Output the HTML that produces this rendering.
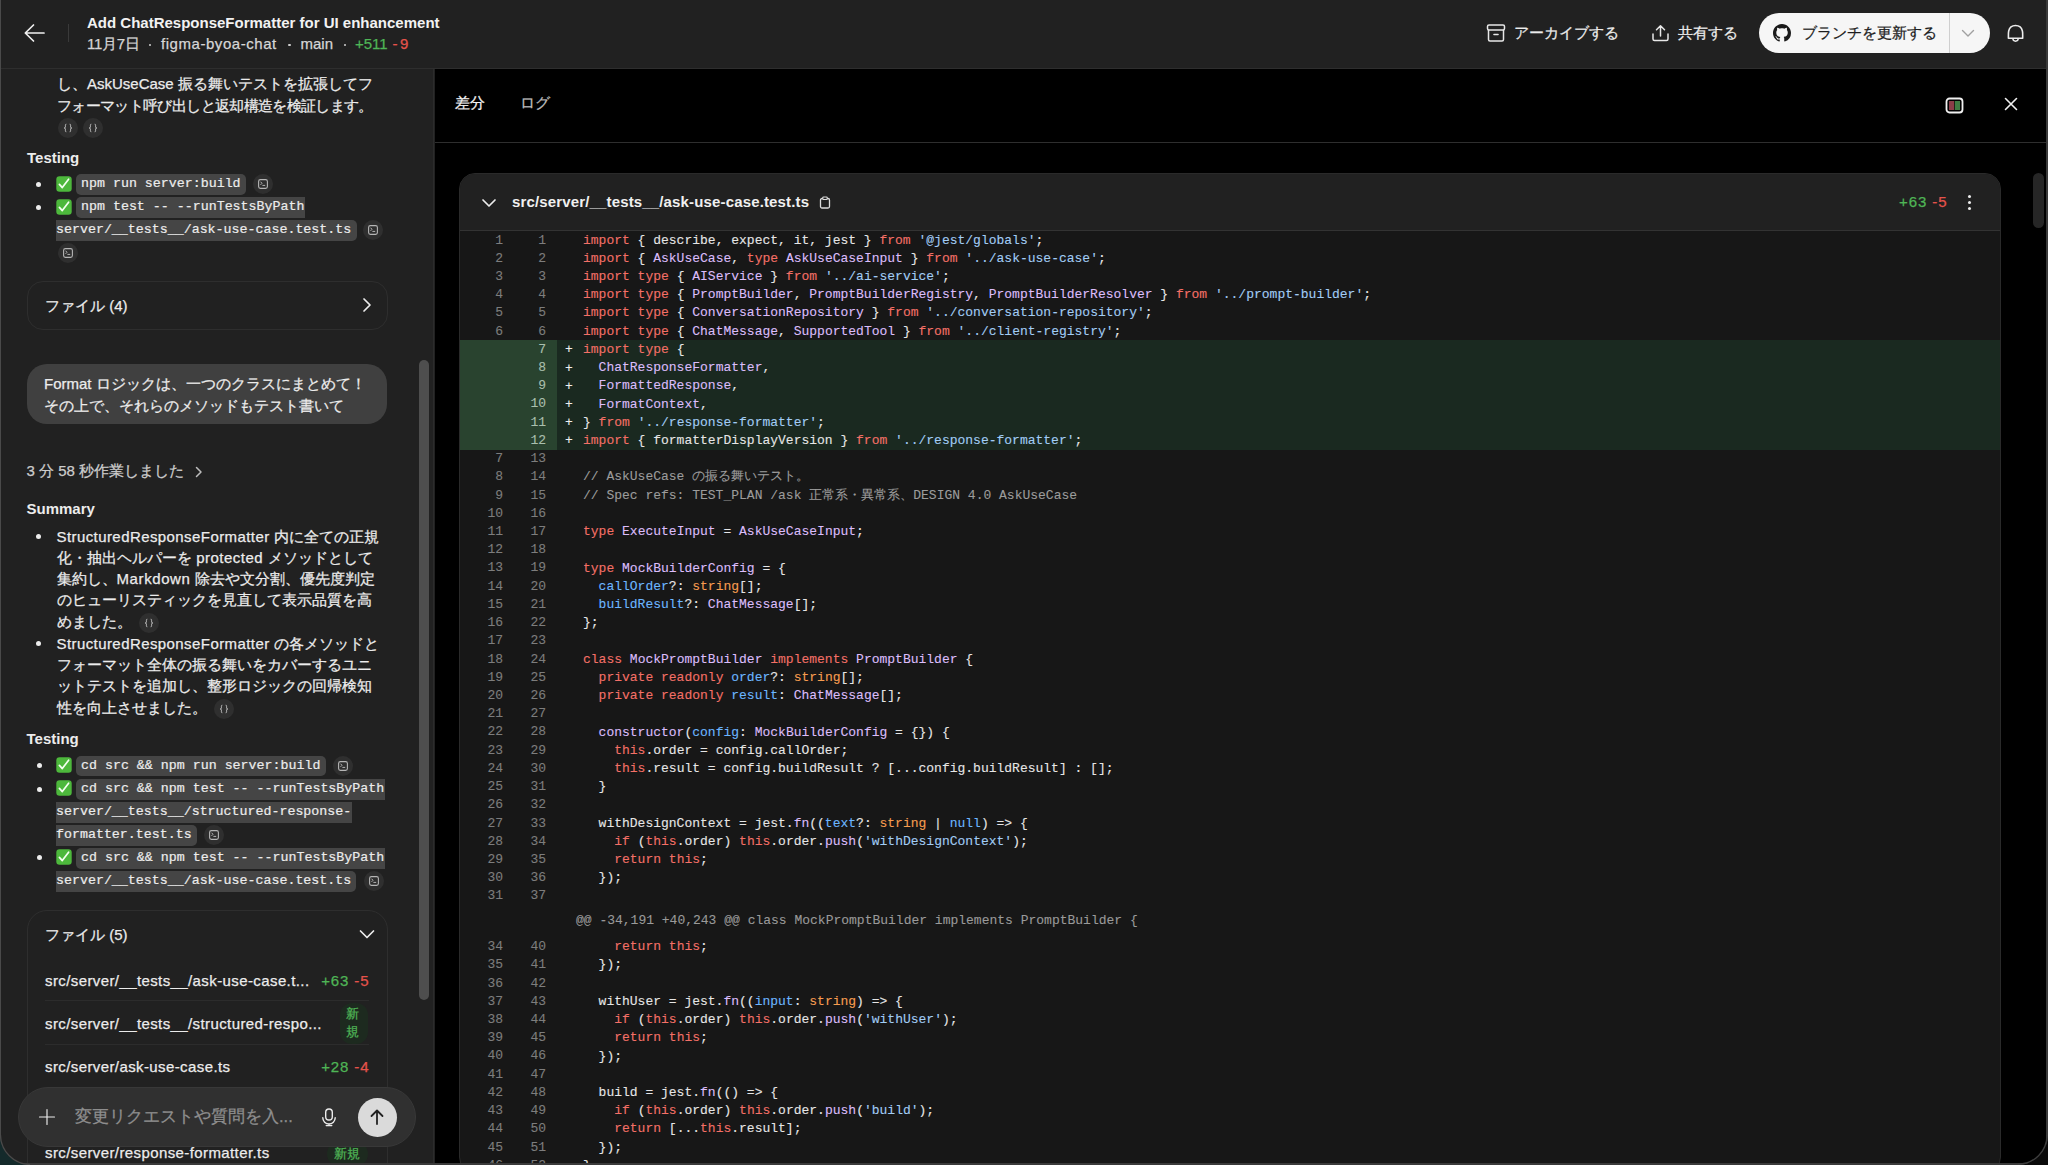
<!DOCTYPE html>
<html><head><meta charset="utf-8">
<style>
*{box-sizing:border-box}
html,body{margin:0;padding:0}
body{width:2048px;height:1165px;overflow:hidden;background:#212121;position:relative;font-family:"Liberation Sans",sans-serif;color:#ececec}
.a{position:absolute;white-space:pre}
.mono{font-family:"Liberation Mono",monospace}
/* header */
#hdr{position:absolute;left:0;top:0;width:2048px;height:69px;background:#212121;border-bottom:1px solid #2e2e2e;z-index:5}
/* sidebar */
#side{position:absolute;left:0;top:69px;width:434px;height:1096px;background:#212121;border-right:1px solid #2c2c2c;overflow:hidden}
.st{position:absolute;font-size:15px;line-height:20px;color:#ececec;white-space:pre}
.st,.a{-webkit-text-stroke:0.25px currentColor}
.b{font-weight:bold;-webkit-text-stroke:0 !important}
.chip{-webkit-text-stroke:0.2px currentColor}
#code{-webkit-text-stroke:0.1px currentColor}
.w{letter-spacing:0.42px}
.fl{letter-spacing:0.4px}
.dot{position:absolute;width:5px;height:5px;border-radius:50%;background:#ececec}
.chip{position:absolute;height:20.5px;background:#454545;border-radius:5px;font-family:"Liberation Mono",monospace;font-size:13.3px;line-height:20px;color:#ececec;white-space:pre;padding:0 5px}
.ic{position:absolute;width:20px;height:20px;border-radius:50%;background:#2f2f2f}
.ic svg{position:absolute;left:5px;top:5px}
.emo{position:absolute;width:16px;height:16px}
/* diff */
#diff{position:absolute;left:435px;top:69px;width:1611px;height:1096px;background:#000;overflow:hidden}
#card{position:absolute;left:24px;top:104px;width:1542px;height:1000px;border:1px solid #2a2a2a;border-radius:16px;overflow:hidden;background:#171717}
#ch{position:absolute;left:0;top:0;width:100%;height:57px;background:#212121;border-bottom:1px solid #333}
#code{position:absolute;left:0;top:57px;width:100%;font-family:"Liberation Mono",monospace;font-size:13px;color:#e6e6e6}
.row{height:18.23px;line-height:18.23px;white-space:pre;position:relative}
.row .g{display:inline-block;width:97px;height:100%;position:relative;vertical-align:top}
.row .on{position:absolute;right:54px;top:0.5px;color:#7d7d7d}
.row .nn{position:absolute;right:11px;top:0.5px;color:#7d7d7d}
.row .sg{display:inline-block;width:26px;padding-left:8px;vertical-align:top;color:#f0f0f0;position:relative;top:1px}
.row.add{background:#1a2920}
.row.add .g{background:#29432f}
.row.add .nn{color:#a9bfad}
.hunk{height:32.5px;line-height:32.5px;white-space:pre;padding-left:116px;color:#9a9a9a}
.k{color:#f47067}.t{color:#dcbdfb}.s{color:#a2cdf5}.p{color:#6cb6ff}.o{color:#f69d50}.c{color:#9c9c9c}
.row .tx{position:relative;top:0.6px}
</style></head><body>

<!-- ============ HEADER ============ -->
<div id="hdr">
  <svg class="a" style="left:22px;top:22px" width="24" height="22" viewBox="0 0 24 22"><path d="M22 11H3.5M11.5 3L3.3 11L11.5 19" fill="none" stroke="#f0f0f0" stroke-width="1.7" stroke-linecap="round" stroke-linejoin="round"/></svg>
  <div class="a" style="left:68px;top:24px;width:1px;height:18px;background:#3a3a3a"></div>
  <div class="a b" style="left:87px;top:14px;font-size:15px;line-height:18px;color:#f2f2f2">Add ChatResponseFormatter for UI enhancement</div>
  <div class="a" style="left:87px;top:34.5px;font-size:15px;line-height:18px;color:#d6d6d6;letter-spacing:-0.3px">11月7日</div>
  <div class="a" style="left:148.5px;top:43.5px;width:2.5px;height:2.5px;border-radius:50%;background:#cfcfcf"></div>
  <div class="a" style="left:161px;top:34.5px;font-size:15px;line-height:18px;color:#d6d6d6;letter-spacing:0.55px">figma-byoa-chat</div>
  <div class="a" style="left:288px;top:43.5px;width:2.5px;height:2.5px;border-radius:50%;background:#cfcfcf"></div>
  <div class="a" style="left:300.5px;top:34.5px;font-size:15px;line-height:18px;color:#d6d6d6">main</div>
  <div class="a" style="left:343.5px;top:43.5px;width:2.5px;height:2.5px;border-radius:50%;background:#cfcfcf"></div>
  <div class="a" style="left:355px;top:34.5px;font-size:15px;line-height:18px;color:#4fb556">+511</div>
  <div class="a" style="left:392.5px;top:34.5px;font-size:15px;line-height:18px;color:#e5534b"><span style="letter-spacing:2.5px">-</span>9</div>

  <svg class="a" style="left:1486px;top:24px" width="20" height="18" viewBox="0 0 20 18"><rect x="1.5" y="1" width="17" height="5" rx="1.5" fill="none" stroke="#e8e8e8" stroke-width="1.5"/><path d="M2.5 6v9.5a1.5 1.5 0 0 0 1.5 1.5h12a1.5 1.5 0 0 0 1.5-1.5V6" fill="none" stroke="#e8e8e8" stroke-width="1.5"/><path d="M8 10.5h4" stroke="#e8e8e8" stroke-width="1.6" stroke-linecap="round"/></svg>
  <div class="a" style="left:1514px;top:24px;font-size:15px;line-height:18px;color:#ececec">アーカイブする</div>
  <svg class="a" style="left:1651px;top:24px" width="20" height="18" viewBox="0 0 20 18"><path d="M2 10v5a1.5 1.5 0 0 0 1.5 1.5h12A1.5 1.5 0 0 0 17 15v-5" fill="none" stroke="#e8e8e8" stroke-width="1.5" stroke-linecap="round"/><path d="M9.5 12V2.2M5.5 5.8L9.5 1.8L13.5 5.8" fill="none" stroke="#e8e8e8" stroke-width="1.5" stroke-linecap="round" stroke-linejoin="round"/></svg>
  <div class="a" style="left:1678px;top:24px;font-size:15px;line-height:18px;color:#ececec">共有する</div>

  <div class="a" style="left:1759px;top:13px;width:231px;height:40px;border-radius:20px;background:#f6f6f6"></div>
  <svg class="a" style="left:1773px;top:24px" width="18" height="18" viewBox="0 0 16 16"><path fill="#1a1a1a" d="M8 0C3.58 0 0 3.58 0 8c0 3.54 2.29 6.53 5.47 7.59.4.07.55-.17.55-.38 0-.19-.01-.82-.01-1.49-2.01.37-2.53-.49-2.69-.94-.09-.23-.48-.94-.82-1.13-.28-.15-.68-.52-.01-.53.63-.01 1.08.58 1.23.82.72 1.21 1.87.87 2.33.66.07-.52.28-.87.51-1.07-1.78-.2-3.640-.89-3.64-3.95 0-.87.31-1.59.82-2.15-.08-.2-.36-1.02.08-2.12 0 0 .67-.21 2.2.82.64-.18 1.32-.27 2-.27.68 0 1.36.09 2 .27 1.53-1.04 2.2-.82 2.2-.82.44 1.1.16 1.92.08 2.12.51.56.82 1.27.82 2.15 0 3.07-1.87 3.75-3.65 3.95.29.25.54.73.54 1.48 0 1.07-.01 1.93-.01 2.2 0 .21.15.46.55.38A8.013 8.013 0 0016 8c0-4.42-3.58-8-8-8z"/></svg>
  <div class="a" style="left:1802px;top:24px;font-size:15px;line-height:18px;color:#1e1e1e">ブランチを更新する</div>
  <div class="a" style="left:1949px;top:13px;width:1px;height:40px;background:#cfcfcf"></div>
  <svg class="a" style="left:1961px;top:28px" width="14" height="10" viewBox="0 0 14 10"><path d="M1.5 2.5L7 8L12.5 2.5" fill="none" stroke="#a0a0a0" stroke-width="1.4" stroke-linecap="round" stroke-linejoin="round"/></svg>
  <svg class="a" style="left:2005px;top:22.5px" width="21" height="22" viewBox="0 0 21 22"><path d="M3.4 15.2C3.5 12.5 3.2 10.2 3.7 8C4.4 4.6 7.1 2.5 10.55 2.5C14 2.5 16.7 4.6 17.4 8C17.9 10.2 17.6 12.5 17.7 15.2Z" fill="none" stroke="#ececec" stroke-width="1.6" stroke-linejoin="round"/><path d="M7.9 15.8C8 18.9 13.1 18.9 13.2 15.8" fill="none" stroke="#ececec" stroke-width="1.5"/></svg>
</div>

<!-- ============ SIDEBAR ============ -->
<div id="side">
  <!-- coordinates inside: y = abs - 69 -->
  <div class="st" style="left:57px;top:5px">し、AskUseCase 振る舞いテストを拡張してフ</div>
  <div class="st" style="left:57px;top:26.5px;letter-spacing:-0.65px">フォーマット呼び出しと返却構造を検証します。</div>
  <div class="ic" style="left:58px;top:48.5px"><svg width="10" height="10" viewBox="0 0 10 10"><path d="M3.3 1.2C2.4 1.2 2.4 1.8 2.4 2.8V3.8C2.4 4.5 2 5 1.3 5C2 5 2.4 5.5 2.4 6.2V7.2C2.4 8.2 2.4 8.8 3.3 8.8M6.7 1.2C7.6 1.2 7.6 1.8 7.6 2.8V3.8C7.6 4.5 8 5 8.7 5C8 5 7.6 5.5 7.6 6.2V7.2C7.6 8.2 7.6 8.8 6.7 8.8" fill="none" stroke="#cfcfcf" stroke-width="0.9"/></svg></div>
  <div class="ic" style="left:82.5px;top:48.5px"><svg width="10" height="10" viewBox="0 0 10 10"><path d="M3.3 1.2C2.4 1.2 2.4 1.8 2.4 2.8V3.8C2.4 4.5 2 5 1.3 5C2 5 2.4 5.5 2.4 6.2V7.2C2.4 8.2 2.4 8.8 3.3 8.8M6.7 1.2C7.6 1.2 7.6 1.8 7.6 2.8V3.8C7.6 4.5 8 5 8.7 5C8 5 7.6 5.5 7.6 6.2V7.2C7.6 8.2 7.6 8.8 6.7 8.8" fill="none" stroke="#cfcfcf" stroke-width="0.9"/></svg></div>

  <div class="st b" style="left:27px;top:78.5px">Testing</div>
  <!-- bullet 1 -->
  <div class="dot" style="left:36px;top:113px"></div>
  <svg class="emo" style="left:56px;top:107px" viewBox="0 0 16 16"><rect x="0.3" y="0.3" width="15.4" height="15.4" rx="3.2" fill="#4db83c"/><path d="M3.4 8.4L6.3 11.6L12.6 3.2" fill="none" stroke="#f4fff0" stroke-width="1.7" stroke-linecap="round" stroke-linejoin="round"/></svg>
  <div class="chip" style="left:76px;top:105px;width:170px">npm run server:build</div>
  <div class="ic" style="left:253px;top:104.5px"><svg width="10" height="10" viewBox="0 0 10 10"><rect x="0.6" y="0.6" width="8.8" height="8.8" rx="1.8" fill="none" stroke="#b5b5b5" stroke-width="1.1"/><path d="M2.8 3L4 4.3L2.8 5.6M4.8 6.4H6.8" fill="none" stroke="#b5b5b5" stroke-width="1" stroke-linecap="round"/></svg></div>
  <!-- bullet 2 -->
  <div class="dot" style="left:36px;top:136px"></div>
  <svg class="emo" style="left:56px;top:130px" viewBox="0 0 16 16"><rect x="0.3" y="0.3" width="15.4" height="15.4" rx="3.2" fill="#4db83c"/><path d="M3.4 8.4L6.3 11.6L12.6 3.2" fill="none" stroke="#f4fff0" stroke-width="1.7" stroke-linecap="round" stroke-linejoin="round"/></svg>
  <div class="chip" style="left:76px;top:128px;width:229px;border-radius:5px 0 0 5px">npm test -- --runTestsByPath</div>
  <div class="chip" style="left:56px;top:151px;width:301px;border-radius:0 5px 5px 0;padding-left:0">server/__tests__/ask-use-case.test.ts</div>
  <div class="ic" style="left:363px;top:151px"><svg width="10" height="10" viewBox="0 0 10 10"><rect x="0.6" y="0.6" width="8.8" height="8.8" rx="1.8" fill="none" stroke="#b5b5b5" stroke-width="1.1"/><path d="M2.8 3L4 4.3L2.8 5.6M4.8 6.4H6.8" fill="none" stroke="#b5b5b5" stroke-width="1" stroke-linecap="round"/></svg></div>
  <div class="ic" style="left:58px;top:174px"><svg width="10" height="10" viewBox="0 0 10 10"><rect x="0.6" y="0.6" width="8.8" height="8.8" rx="1.8" fill="none" stroke="#b5b5b5" stroke-width="1.1"/><path d="M2.8 3L4 4.3L2.8 5.6M4.8 6.4H6.8" fill="none" stroke="#b5b5b5" stroke-width="1" stroke-linecap="round"/></svg></div>

  <!-- files (4) -->
  <div class="a" style="left:26.5px;top:211.5px;width:361px;height:49px;border:1px solid #2e2e2e;border-radius:16px"></div>
  <div class="st" style="left:45px;top:227px">ファイル (4)</div>
  <svg class="a" style="left:360px;top:228px" width="14" height="16" viewBox="0 0 14 16"><path d="M4 2L10 8L4 14" fill="none" stroke="#ececec" stroke-width="1.7" stroke-linecap="round" stroke-linejoin="round"/></svg>

  <!-- user bubble -->
  <div class="a" style="left:27px;top:295px;width:360px;height:60px;border-radius:20px;background:#404040"></div>
  <div class="st" style="left:44px;top:305px">Format ロジックは、一つのクラスにまとめて！</div>
  <div class="st" style="left:44px;top:326.5px">その上で、それらのメソッドもテスト書いて</div>

  <div class="st" style="left:26.5px;top:391.5px;color:#cdcdcd">3 分 58 秒作業しました</div>
  <svg class="a" style="left:193px;top:396px" width="12" height="14" viewBox="0 0 12 14"><path d="M3.5 2.5L8 7L3.5 11.5" fill="none" stroke="#bdbdbd" stroke-width="1.5" stroke-linecap="round" stroke-linejoin="round"/></svg>

  <div class="st b" style="left:26.5px;top:429.5px">Summary</div>
  <div class="dot" style="left:36px;top:465px"></div>
  <div class="st" style="left:56.5px;top:457.5px"><span class="w">StructuredResponseFormatter </span>内に全ての正規</div>
  <div class="st" style="left:56.5px;top:478.8px">化・抽出ヘルパーを<span style="letter-spacing:0.5px"> protected </span>メソッドとして</div>
  <div class="st" style="left:56.5px;top:500px">集約し、<span style="letter-spacing:0.6px">Markdown </span>除去や文分割、優先度判定</div>
  <div class="st" style="left:56.5px;top:521px">のヒューリスティックを見直して表示品質を高</div>
  <div class="st" style="left:56.5px;top:542.5px">めました。</div>
  <div class="ic" style="left:138.5px;top:543.5px"><svg width="10" height="10" viewBox="0 0 10 10"><path d="M3.3 1.2C2.4 1.2 2.4 1.8 2.4 2.8V3.8C2.4 4.5 2 5 1.3 5C2 5 2.4 5.5 2.4 6.2V7.2C2.4 8.2 2.4 8.8 3.3 8.8M6.7 1.2C7.6 1.2 7.6 1.8 7.6 2.8V3.8C7.6 4.5 8 5 8.7 5C8 5 7.6 5.5 7.6 6.2V7.2C7.6 8.2 7.6 8.8 6.7 8.8" fill="none" stroke="#cfcfcf" stroke-width="0.9"/></svg></div>
  <div class="dot" style="left:36px;top:572px"></div>
  <div class="st" style="left:56.5px;top:565px"><span class="w">StructuredResponseFormatter </span>の各メソッドと</div>
  <div class="st" style="left:56.5px;top:586px">フォーマット全体の振る舞いをカバーするユニ</div>
  <div class="st" style="left:56.5px;top:607px">ットテストを追加し、整形ロジックの回帰検知</div>
  <div class="st" style="left:56.5px;top:629.4px">性を向上させました。</div>
  <div class="ic" style="left:214px;top:629.5px"><svg width="10" height="10" viewBox="0 0 10 10"><path d="M3.3 1.2C2.4 1.2 2.4 1.8 2.4 2.8V3.8C2.4 4.5 2 5 1.3 5C2 5 2.4 5.5 2.4 6.2V7.2C2.4 8.2 2.4 8.8 3.3 8.8M6.7 1.2C7.6 1.2 7.6 1.8 7.6 2.8V3.8C7.6 4.5 8 5 8.7 5C8 5 7.6 5.5 7.6 6.2V7.2C7.6 8.2 7.6 8.8 6.7 8.8" fill="none" stroke="#cfcfcf" stroke-width="0.9"/></svg></div>

  <div class="st b" style="left:26.5px;top:659.5px">Testing</div>
  <div class="dot" style="left:36.5px;top:693.5px"></div>
  <svg class="emo" style="left:56px;top:688px" viewBox="0 0 16 16"><rect x="0.3" y="0.3" width="15.4" height="15.4" rx="3.2" fill="#4db83c"/><path d="M3.4 8.4L6.3 11.6L12.6 3.2" fill="none" stroke="#f4fff0" stroke-width="1.7" stroke-linecap="round" stroke-linejoin="round"/></svg>
  <div class="chip" style="left:76px;top:686.5px;width:250px">cd src &amp;&amp; npm run server:build</div>
  <div class="ic" style="left:332.5px;top:686.5px"><svg width="10" height="10" viewBox="0 0 10 10"><rect x="0.6" y="0.6" width="8.8" height="8.8" rx="1.8" fill="none" stroke="#b5b5b5" stroke-width="1.1"/><path d="M2.8 3L4 4.3L2.8 5.6M4.8 6.4H6.8" fill="none" stroke="#b5b5b5" stroke-width="1" stroke-linecap="round"/></svg></div>
  <div class="dot" style="left:36.5px;top:717.5px"></div>
  <svg class="emo" style="left:56px;top:711px" viewBox="0 0 16 16"><rect x="0.3" y="0.3" width="15.4" height="15.4" rx="3.2" fill="#4db83c"/><path d="M3.4 8.4L6.3 11.6L12.6 3.2" fill="none" stroke="#f4fff0" stroke-width="1.7" stroke-linecap="round" stroke-linejoin="round"/></svg>
  <div class="chip" style="left:76px;top:710px;width:309px;border-radius:5px 0 0 5px">cd src &amp;&amp; npm test -- --runTestsByPath</div>
  <div class="chip" style="left:56px;top:733px;width:296px;border-radius:0;padding-left:0">server/__tests__/structured-response-</div>
  <div class="chip" style="left:56px;top:756px;width:141px;border-radius:0 5px 5px 0;padding-left:0">formatter.test.ts</div>
  <div class="ic" style="left:203.5px;top:756px"><svg width="10" height="10" viewBox="0 0 10 10"><rect x="0.6" y="0.6" width="8.8" height="8.8" rx="1.8" fill="none" stroke="#b5b5b5" stroke-width="1.1"/><path d="M2.8 3L4 4.3L2.8 5.6M4.8 6.4H6.8" fill="none" stroke="#b5b5b5" stroke-width="1" stroke-linecap="round"/></svg></div>
  <div class="dot" style="left:36.5px;top:786px"></div>
  <svg class="emo" style="left:56px;top:780px" viewBox="0 0 16 16"><rect x="0.3" y="0.3" width="15.4" height="15.4" rx="3.2" fill="#4db83c"/><path d="M3.4 8.4L6.3 11.6L12.6 3.2" fill="none" stroke="#f4fff0" stroke-width="1.7" stroke-linecap="round" stroke-linejoin="round"/></svg>
  <div class="chip" style="left:76px;top:779px;width:309px;border-radius:5px 0 0 5px">cd src &amp;&amp; npm test -- --runTestsByPath</div>
  <div class="chip" style="left:56px;top:802px;width:300px;border-radius:0 5px 5px 0;padding-left:0">server/__tests__/ask-use-case.test.ts</div>
  <div class="ic" style="left:363.5px;top:802px"><svg width="10" height="10" viewBox="0 0 10 10"><rect x="0.6" y="0.6" width="8.8" height="8.8" rx="1.8" fill="none" stroke="#b5b5b5" stroke-width="1.1"/><path d="M2.8 3L4 4.3L2.8 5.6M4.8 6.4H6.8" fill="none" stroke="#b5b5b5" stroke-width="1" stroke-linecap="round"/></svg></div>

  <!-- files (5) -->
  <div class="a" style="left:26.5px;top:841px;width:361px;height:300px;border:1px solid #2e2e2e;border-radius:20px"></div>
  <div class="st" style="left:45px;top:856px">ファイル (5)</div>
  <svg class="a" style="left:358px;top:858px" width="18" height="14" viewBox="0 0 18 14"><path d="M2.5 4L9 10.5L15.5 4" fill="none" stroke="#ececec" stroke-width="1.7" stroke-linecap="round" stroke-linejoin="round"/></svg>
  <div class="st fl" style="left:45px;top:901.5px">src/server/__tests__/ask-use-case.t...</div>
  <div class="st" style="left:280px;width:89.5px;text-align:right;letter-spacing:0.9px;top:901.5px"><span style="color:#4fb556">+63</span> <span style="color:#e5534b">-5</span></div>
  <div class="a" style="left:44.5px;top:931px;width:324px;height:1px;background:#2c2c2c"></div>
  <div class="st fl" style="left:45px;top:945px">src/server/__tests__/structured-respo...</div>
  <div class="a" style="left:340px;top:934px;width:28px;height:41px;border-radius:12px;background:#1d2a1f"></div>
  <div class="a" style="left:346px;top:936px;font-size:13px;line-height:18px;color:#4fb556;white-space:normal;width:16px">新<br>規</div>
  <div class="a" style="left:44.5px;top:975px;width:324px;height:1px;background:#2c2c2c"></div>
  <div class="st fl" style="left:45px;top:988px">src/server/ask-use-case.ts</div>
  <div class="st" style="left:280px;width:89.5px;text-align:right;letter-spacing:0.9px;top:988px"><span style="color:#4fb556">+28</span> <span style="color:#e5534b">-4</span></div>
  <div class="st fl" style="left:45px;top:1074px">src/server/response-formatter.ts</div>
  <div class="a" style="left:327px;top:1073px;width:41px;height:24px;border-radius:12px;background:#1d2a1f"></div>
  <div class="a" style="left:334px;top:1076px;font-size:13px;line-height:18px;color:#4fb556">新規</div>

  <!-- composer -->
  <div class="a" style="left:17.5px;top:1018px;width:398px;height:60px;border-radius:30px;background:#303030;border:1px solid #383838"></div>
  <svg class="a" style="left:38px;top:1039px" width="18" height="18" viewBox="0 0 18 18"><path d="M9 1.5V16.5M1.5 9H16.5" stroke="#ececec" stroke-width="1.15" stroke-linecap="round"/></svg>
  <div class="st" style="left:75px;top:1036px;font-size:16.5px;line-height:22px;color:#8e8e8e">変更リクエストや質問を入...</div>
  <svg class="a" style="left:319px;top:1038px" width="20" height="20" viewBox="0 0 20 20"><rect x="6.7" y="2" width="6.6" height="11" rx="3.3" fill="none" stroke="#ececec" stroke-width="1.4"/><path d="M3.8 10.8A6.2 6.2 0 0 0 16.2 10.8M10 17V18.6M7.2 18.6H12.8" fill="none" stroke="#ececec" stroke-width="1.4" stroke-linecap="round"/></svg>
  <div class="a" style="left:357.5px;top:1028.5px;width:39.5px;height:39.5px;border-radius:50%;background:#dadada"></div>
  <svg class="a" style="left:367px;top:1038px" width="20" height="20" viewBox="0 0 20 20"><path d="M10 17V3.5M4.5 9L10 3.5L15.5 9" fill="none" stroke="#222" stroke-width="1.8" stroke-linecap="round" stroke-linejoin="round"/></svg>

  <!-- scrollbar -->
  <div class="a" style="left:419px;top:291px;width:10px;height:640px;border-radius:5px;background:#4e4e4e"></div>
</div>

<!-- ============ DIFF ============ -->
<div id="diff">
  <div class="a" style="left:20px;top:24px;font-size:15px;line-height:20px;color:#f2f2f2">差分</div>
  <div class="a" style="left:85px;top:24px;font-size:15px;line-height:20px;color:#bdbdbd">ログ</div>
  <svg class="a" style="left:1510px;top:28px" width="19" height="17" viewBox="0 0 19 17"><rect x="1.5" y="1.5" width="16" height="14" rx="3" fill="#000" stroke="#f0f0f0" stroke-width="1.8"/><rect x="4" y="4" width="5.2" height="9" fill="#8b3d48"/><rect x="9.8" y="4" width="5.2" height="9" fill="#3f7c43"/></svg>
  <svg class="a" style="left:1569px;top:28px" width="14" height="14" viewBox="0 0 14 14"><path d="M1.5 1.5L12.5 12.5M12.5 1.5L1.5 12.5" stroke="#f0f0f0" stroke-width="1.6" stroke-linecap="round"/></svg>
  <div class="a" style="left:0;top:73px;width:1611px;height:1px;background:#2e2e2e"></div>

  <div id="card">
    <div id="ch">
      <svg class="a" style="left:21px;top:23px" width="16" height="12" viewBox="0 0 16 12"><path d="M2 3L8 9L14 3" fill="none" stroke="#ececec" stroke-width="1.7" stroke-linecap="round" stroke-linejoin="round"/></svg>
      <div class="a b" style="left:52px;top:19px;font-size:15px;line-height:18px;color:#f0f0f0;letter-spacing:0.15px">src/server/__tests__/ask-use-case.test.ts</div>
      <svg class="a" style="left:359px;top:22px" width="12" height="13" viewBox="0 0 12 13"><rect x="1.5" y="2.5" width="9" height="9.5" rx="1.5" fill="none" stroke="#dcdcdc" stroke-width="1.3"/><rect x="3.8" y="1" width="4.4" height="2.5" rx="0.8" fill="#212121" stroke="#dcdcdc" stroke-width="1.2"/></svg>
      <div class="a" style="left:1439px;top:19px;font-size:15px;line-height:18px;letter-spacing:0.9px"><span style="color:#4fb556">+63</span> <span style="color:#e5534b">-5</span></div>
      <div class="a" style="left:1507.5px;top:21px;width:3.4px;height:3.4px;border-radius:50%;background:#ececec"></div>
      <div class="a" style="left:1507.5px;top:27px;width:3.4px;height:3.4px;border-radius:50%;background:#ececec"></div>
      <div class="a" style="left:1507.5px;top:33px;width:3.4px;height:3.4px;border-radius:50%;background:#ececec"></div>
    </div>
    <div id="code">
<div class="row"><span class="g"><span class="on">1</span><span class="nn">1</span></span><span class="sg"></span><span class="tx"><span class="k">import</span> { describe, expect, it, jest } <span class="k">from</span> <span class="s">'@jest/globals'</span>;</span></div>
<div class="row"><span class="g"><span class="on">2</span><span class="nn">2</span></span><span class="sg"></span><span class="tx"><span class="k">import</span> { <span class="t">AskUseCase</span>, <span class="k">type</span> <span class="t">AskUseCaseInput</span> } <span class="k">from</span> <span class="s">'../ask-use-case'</span>;</span></div>
<div class="row"><span class="g"><span class="on">3</span><span class="nn">3</span></span><span class="sg"></span><span class="tx"><span class="k">import type</span> { <span class="t">AIService</span> } <span class="k">from</span> <span class="s">'../ai-service'</span>;</span></div>
<div class="row"><span class="g"><span class="on">4</span><span class="nn">4</span></span><span class="sg"></span><span class="tx"><span class="k">import type</span> { <span class="t">PromptBuilder</span>, <span class="t">PromptBuilderRegistry</span>, <span class="t">PromptBuilderResolver</span> } <span class="k">from</span> <span class="s">'../prompt-builder'</span>;</span></div>
<div class="row"><span class="g"><span class="on">5</span><span class="nn">5</span></span><span class="sg"></span><span class="tx"><span class="k">import type</span> { <span class="t">ConversationRepository</span> } <span class="k">from</span> <span class="s">'../conversation-repository'</span>;</span></div>
<div class="row"><span class="g"><span class="on">6</span><span class="nn">6</span></span><span class="sg"></span><span class="tx"><span class="k">import type</span> { <span class="t">ChatMessage</span>, <span class="t">SupportedTool</span> } <span class="k">from</span> <span class="s">'../client-registry'</span>;</span></div>
<div class="row add"><span class="g"><span class="on"></span><span class="nn">7</span></span><span class="sg">+</span><span class="tx"><span class="k">import type</span> {</span></div>
<div class="row add"><span class="g"><span class="on"></span><span class="nn">8</span></span><span class="sg">+</span><span class="tx">  <span class="t">ChatResponseFormatter</span>,</span></div>
<div class="row add"><span class="g"><span class="on"></span><span class="nn">9</span></span><span class="sg">+</span><span class="tx">  <span class="t">FormattedResponse</span>,</span></div>
<div class="row add"><span class="g"><span class="on"></span><span class="nn">10</span></span><span class="sg">+</span><span class="tx">  <span class="t">FormatContext</span>,</span></div>
<div class="row add"><span class="g"><span class="on"></span><span class="nn">11</span></span><span class="sg">+</span><span class="tx">} <span class="k">from</span> <span class="s">'../response-formatter'</span>;</span></div>
<div class="row add"><span class="g"><span class="on"></span><span class="nn">12</span></span><span class="sg">+</span><span class="tx"><span class="k">import</span> { formatterDisplayVersion } <span class="k">from</span> <span class="s">'../response-formatter'</span>;</span></div>
<div class="row"><span class="g"><span class="on">7</span><span class="nn">13</span></span><span class="sg"></span><span class="tx"></span></div>
<div class="row"><span class="g"><span class="on">8</span><span class="nn">14</span></span><span class="sg"></span><span class="tx"><span class="c">// AskUseCase の振る舞いテスト。</span></span></div>
<div class="row"><span class="g"><span class="on">9</span><span class="nn">15</span></span><span class="sg"></span><span class="tx"><span class="c">// Spec refs: TEST_PLAN /ask 正常系・異常系、DESIGN 4.0 AskUseCase</span></span></div>
<div class="row"><span class="g"><span class="on">10</span><span class="nn">16</span></span><span class="sg"></span><span class="tx"></span></div>
<div class="row"><span class="g"><span class="on">11</span><span class="nn">17</span></span><span class="sg"></span><span class="tx"><span class="k">type</span> <span class="t">ExecuteInput</span> = <span class="t">AskUseCaseInput</span>;</span></div>
<div class="row"><span class="g"><span class="on">12</span><span class="nn">18</span></span><span class="sg"></span><span class="tx"></span></div>
<div class="row"><span class="g"><span class="on">13</span><span class="nn">19</span></span><span class="sg"></span><span class="tx"><span class="k">type</span> <span class="t">MockBuilderConfig</span> = {</span></div>
<div class="row"><span class="g"><span class="on">14</span><span class="nn">20</span></span><span class="sg"></span><span class="tx">  <span class="p">callOrder</span>?: <span class="o">string</span>[];</span></div>
<div class="row"><span class="g"><span class="on">15</span><span class="nn">21</span></span><span class="sg"></span><span class="tx">  <span class="p">buildResult</span>?: <span class="t">ChatMessage</span>[];</span></div>
<div class="row"><span class="g"><span class="on">16</span><span class="nn">22</span></span><span class="sg"></span><span class="tx">};</span></div>
<div class="row"><span class="g"><span class="on">17</span><span class="nn">23</span></span><span class="sg"></span><span class="tx"></span></div>
<div class="row"><span class="g"><span class="on">18</span><span class="nn">24</span></span><span class="sg"></span><span class="tx"><span class="k">class</span> <span class="t">MockPromptBuilder</span> <span class="k">implements</span> <span class="t">PromptBuilder</span> {</span></div>
<div class="row"><span class="g"><span class="on">19</span><span class="nn">25</span></span><span class="sg"></span><span class="tx">  <span class="k">private readonly</span> <span class="p">order</span>?: <span class="o">string</span>[];</span></div>
<div class="row"><span class="g"><span class="on">20</span><span class="nn">26</span></span><span class="sg"></span><span class="tx">  <span class="k">private readonly</span> <span class="p">result</span>: <span class="t">ChatMessage</span>[];</span></div>
<div class="row"><span class="g"><span class="on">21</span><span class="nn">27</span></span><span class="sg"></span><span class="tx"></span></div>
<div class="row"><span class="g"><span class="on">22</span><span class="nn">28</span></span><span class="sg"></span><span class="tx">  <span class="t">constructor</span>(<span class="p">config</span>: <span class="t">MockBuilderConfig</span> = {}) {</span></div>
<div class="row"><span class="g"><span class="on">23</span><span class="nn">29</span></span><span class="sg"></span><span class="tx">    <span class="k">this</span>.order = config.callOrder;</span></div>
<div class="row"><span class="g"><span class="on">24</span><span class="nn">30</span></span><span class="sg"></span><span class="tx">    <span class="k">this</span>.result = config.buildResult ? [...config.buildResult] : [];</span></div>
<div class="row"><span class="g"><span class="on">25</span><span class="nn">31</span></span><span class="sg"></span><span class="tx">  }</span></div>
<div class="row"><span class="g"><span class="on">26</span><span class="nn">32</span></span><span class="sg"></span><span class="tx"></span></div>
<div class="row"><span class="g"><span class="on">27</span><span class="nn">33</span></span><span class="sg"></span><span class="tx">  withDesignContext = jest.<span class="t">fn</span>((<span class="p">text</span>?: <span class="o">string</span> | <span class="p">null</span>) =&gt; {</span></div>
<div class="row"><span class="g"><span class="on">28</span><span class="nn">34</span></span><span class="sg"></span><span class="tx">    <span class="k">if</span> (<span class="k">this</span>.order) <span class="k">this</span>.order.<span class="t">push</span>(<span class="s">'withDesignContext'</span>);</span></div>
<div class="row"><span class="g"><span class="on">29</span><span class="nn">35</span></span><span class="sg"></span><span class="tx">    <span class="k">return this</span>;</span></div>
<div class="row"><span class="g"><span class="on">30</span><span class="nn">36</span></span><span class="sg"></span><span class="tx">  });</span></div>
<div class="row"><span class="g"><span class="on">31</span><span class="nn">37</span></span><span class="sg"></span><span class="tx"></span></div>
<div class="hunk"><span class="hk">@@ -34,191 +40,243 @@ class MockPromptBuilder implements PromptBuilder {</span></div>
<div class="row"><span class="g"><span class="on">34</span><span class="nn">40</span></span><span class="sg"></span><span class="tx">    <span class="k">return this</span>;</span></div>
<div class="row"><span class="g"><span class="on">35</span><span class="nn">41</span></span><span class="sg"></span><span class="tx">  });</span></div>
<div class="row"><span class="g"><span class="on">36</span><span class="nn">42</span></span><span class="sg"></span><span class="tx"></span></div>
<div class="row"><span class="g"><span class="on">37</span><span class="nn">43</span></span><span class="sg"></span><span class="tx">  withUser = jest.<span class="t">fn</span>((<span class="p">input</span>: <span class="o">string</span>) =&gt; {</span></div>
<div class="row"><span class="g"><span class="on">38</span><span class="nn">44</span></span><span class="sg"></span><span class="tx">    <span class="k">if</span> (<span class="k">this</span>.order) <span class="k">this</span>.order.<span class="t">push</span>(<span class="s">'withUser'</span>);</span></div>
<div class="row"><span class="g"><span class="on">39</span><span class="nn">45</span></span><span class="sg"></span><span class="tx">    <span class="k">return this</span>;</span></div>
<div class="row"><span class="g"><span class="on">40</span><span class="nn">46</span></span><span class="sg"></span><span class="tx">  });</span></div>
<div class="row"><span class="g"><span class="on">41</span><span class="nn">47</span></span><span class="sg"></span><span class="tx"></span></div>
<div class="row"><span class="g"><span class="on">42</span><span class="nn">48</span></span><span class="sg"></span><span class="tx">  build = jest.<span class="t">fn</span>(() =&gt; {</span></div>
<div class="row"><span class="g"><span class="on">43</span><span class="nn">49</span></span><span class="sg"></span><span class="tx">    <span class="k">if</span> (<span class="k">this</span>.order) <span class="k">this</span>.order.<span class="t">push</span>(<span class="s">'build'</span>);</span></div>
<div class="row"><span class="g"><span class="on">44</span><span class="nn">50</span></span><span class="sg"></span><span class="tx">    <span class="k">return</span> [...<span class="k">this</span>.result];</span></div>
<div class="row"><span class="g"><span class="on">45</span><span class="nn">51</span></span><span class="sg"></span><span class="tx">  });</span></div>
<div class="row"><span class="g"><span class="on">46</span><span class="nn">52</span></span><span class="sg"></span><span class="tx">}</span></div>
    </div>
  </div>
  <!-- diff scrollbar -->
  <div class="a" style="left:1598px;top:104px;width:11px;height:55px;border-radius:6px;background:#262626"></div>
</div>

<!-- window borders -->
<div class="a" style="left:0;top:0;width:1px;height:1165px;background:#4a4a4a;z-index:9"></div>
<div class="a" style="left:2046px;top:0;width:2px;height:1165px;background:#3a3a3a;z-index:9"></div>
<div class="a" style="left:0;top:1163px;width:2048px;height:2px;background:#3a3a3a;z-index:9"></div>
<svg class="a" style="left:0;top:1125px;z-index:10" width="40" height="40" viewBox="0 0 40 40"><path d="M0 10V40H30A30 30 0 0 1 0 10z" fill="#142a2b"/><path d="M0.5 10A30 30 0 0 0 30 39.5" fill="none" stroke="#4a4a4a" stroke-width="1.2"/></svg>
<svg class="a" style="left:2008px;top:1125px;z-index:10" width="40" height="40" viewBox="0 0 40 40"><path d="M40 10V40H10A30 30 0 0 0 40 10z" fill="#0a0a0a"/><path d="M39 10A29 29 0 0 1 10 39.2" fill="none" stroke="#3e3e3e" stroke-width="1.4"/></svg>
</body></html>
